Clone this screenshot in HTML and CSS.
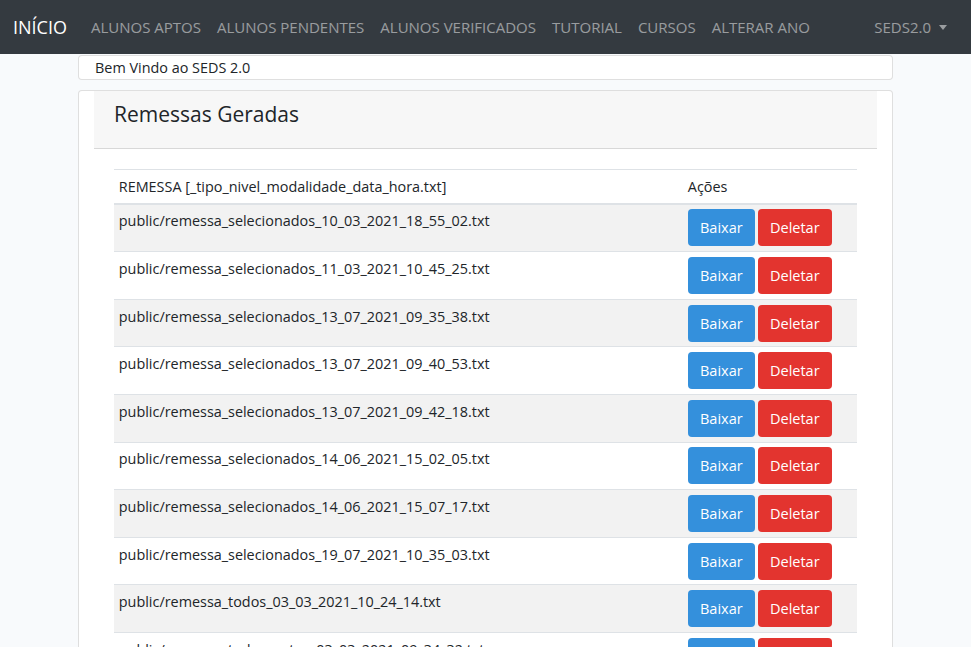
FILE: index.html
```html
<!DOCTYPE html>
<html lang="pt-BR">
<head>
<meta charset="utf-8">
<title>SEDS 2.0</title>
<link rel="stylesheet" href="styles.css">
</head>
<body>
<nav class="navbar">
  <a class="brand" href="#">INÍCIO</a>
  <ul class="nav-links">
    <li><a href="#">ALUNOS APTOS</a></li>
    <li><a href="#">ALUNOS PENDENTES</a></li>
    <li><a href="#">ALUNOS VERIFICADOS</a></li>
    <li><a href="#">TUTORIAL</a></li>
    <li><a href="#">CURSOS</a></li>
    <li><a href="#">ALTERAR ANO</a></li>
  </ul>
  <a class="user-menu" href="#">SEDS2.0 <span class="caret"></span></a>
</nav>
<main class="container">
  <div class="card welcome"><div class="welcome-body">Bem Vindo ao SEDS 2.0</div></div>
  <div class="card remessas">
    <div class="card-header"><h2>Remessas Geradas</h2></div>
    <div class="card-body">
      <table class="table">
        <thead>
          <tr><th class="col-file">REMESSA [_tipo_nivel_modalidade_data_hora.txt]</th><th>Ações</th></tr>
        </thead>
        <tbody>
          <tr><td>public/remessa_selecionados_10_03_2021_18_55_02.txt</td><td><div class="actions"><button class="btn btn-blue">Baixar</button><button class="btn btn-red">Deletar</button></div></td></tr>
          <tr><td>public/remessa_selecionados_11_03_2021_10_45_25.txt</td><td><div class="actions"><button class="btn btn-blue">Baixar</button><button class="btn btn-red">Deletar</button></div></td></tr>
          <tr><td>public/remessa_selecionados_13_07_2021_09_35_38.txt</td><td><div class="actions"><button class="btn btn-blue">Baixar</button><button class="btn btn-red">Deletar</button></div></td></tr>
          <tr><td>public/remessa_selecionados_13_07_2021_09_40_53.txt</td><td><div class="actions"><button class="btn btn-blue">Baixar</button><button class="btn btn-red">Deletar</button></div></td></tr>
          <tr><td>public/remessa_selecionados_13_07_2021_09_42_18.txt</td><td><div class="actions"><button class="btn btn-blue">Baixar</button><button class="btn btn-red">Deletar</button></div></td></tr>
          <tr><td>public/remessa_selecionados_14_06_2021_15_02_05.txt</td><td><div class="actions"><button class="btn btn-blue">Baixar</button><button class="btn btn-red">Deletar</button></div></td></tr>
          <tr><td>public/remessa_selecionados_14_06_2021_15_07_17.txt</td><td><div class="actions"><button class="btn btn-blue">Baixar</button><button class="btn btn-red">Deletar</button></div></td></tr>
          <tr><td>public/remessa_selecionados_19_07_2021_10_35_03.txt</td><td><div class="actions"><button class="btn btn-blue">Baixar</button><button class="btn btn-red">Deletar</button></div></td></tr>
          <tr><td>public/remessa_todos_03_03_2021_10_24_14.txt</td><td><div class="actions"><button class="btn btn-blue">Baixar</button><button class="btn btn-red">Deletar</button></div></td></tr>
          <tr><td>public/remessa_todos_aptos_03_03_2021_09_34_32.txt</td><td><div class="actions"><button class="btn btn-blue">Baixar</button><button class="btn btn-red">Deletar</button></div></td></tr>
        </tbody>
      </table>
    </div>
  </div>
</main>
</body>
</html>
```
FILE: styles.css
```css
* { box-sizing: border-box; }
html, body { margin: 0; padding: 0; }
body {
  background: #f8fafc;
  font-family: "Open Sans", "Noto Sans", sans-serif;
  font-size: 14.4px;
  line-height: 1.6;
  color: #212529;
}
a { text-decoration: none; }

.navbar {
  height: 54px;
  background: #343a40;
  display: flex;
  align-items: center;
  padding: 0 16px 0 13px;
}
.brand {
  color: #fff;
  font-size: 18px;
  margin-right: 16px;
}
.nav-links {
  list-style: none;
  display: flex;
  margin: 0;
  padding: 0;
  flex: 1;
}
.nav-links a, .user-menu {
  display: block;
  color: rgba(255,255,255,.5);
  font-size: 15px;
  padding: 0 8px;
}
.user-menu { display: flex; align-items: center; gap: 8px; }
.caret {
  width: 0; height: 0;
  border-left: 4px solid transparent;
  border-right: 4px solid transparent;
  border-top: 5px solid rgba(255,255,255,.5);
}

.container {
  width: 815px;
  margin: 0 auto;
}
.card {
  background: #fff;
  border: 1px solid rgba(0,0,0,.125);
  border-radius: 4px;
}
.welcome {
  margin-top: 1px;
  margin-bottom: 10px;
}
.welcome-body {
  padding: 0 16px;
  height: 23px;
  line-height: 23px;
}
.remessas {
  padding: 0 15px;
  border-bottom: none;
  border-radius: 4px 4px 0 0;
}
.card-header {
  background: #f7f7f7;
  border-bottom: 1px solid rgba(0,0,0,.125);
  height: 58px;
  display: flex;
  align-items: center;
  padding: 0 20px 10px;
}
.card-header h2 {
  margin: 0;
  font-weight: 400;
  font-size: 21px;
  color: #212529;
}
.card-body {
  padding: 20px 20px;
}
.table {
  width: 100%;
  border-collapse: collapse;
}
.table th, .table td {
  text-align: left;
  vertical-align: top;
  padding: 4.8px;
  font-weight: 400;
  border-top: 1px solid #dee2e6;
}
.table thead th {
  border-bottom: 2px solid #dee2e6;
}
.col-file { width: 569px; }
.table tbody tr:nth-child(odd) { background: #f2f2f2; }
.actions { display: flex; gap: 3px; }
.btn {
  font-family: inherit;
  font-size: 14.5px;
  height: 37px;
  padding: 0 12px;
  border: none;
  border-radius: 4px;
  color: #fff;
  cursor: pointer;
}
.btn-blue { background: #3490dc; width: 67px; }
.btn-red { background: #e3342f; width: 74px; }
```
